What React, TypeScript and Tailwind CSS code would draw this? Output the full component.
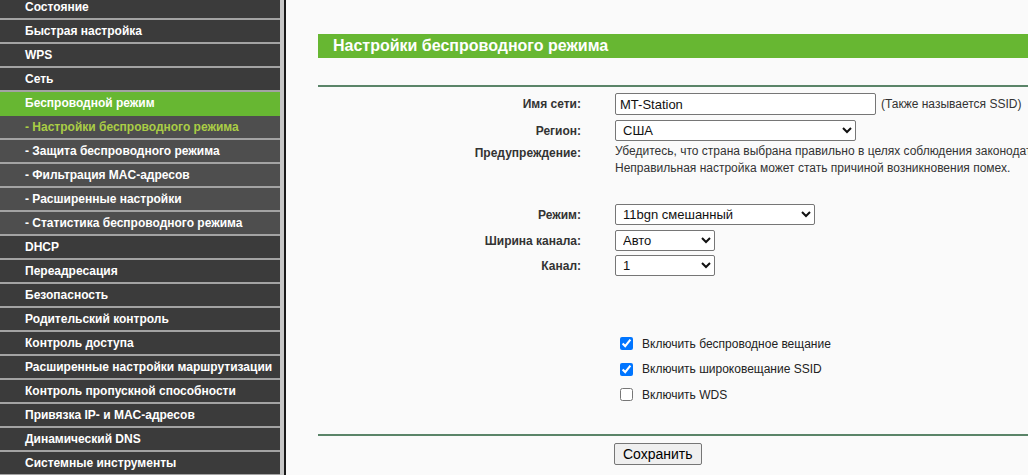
const menu: { label: string; sub?: boolean; active?: boolean; current?: boolean }[] = [
  { label: 'Состояние' },
  { label: 'Быстрая настройка' },
  { label: 'WPS' },
  { label: 'Сеть' },
  { label: 'Беспроводной режим', active: true },
  { label: '- Настройки беспроводного режима', sub: true, current: true },
  { label: '- Защита беспроводного режима', sub: true },
  { label: '- Фильтрация MAC-адресов', sub: true },
  { label: '- Расширенные настройки', sub: true },
  { label: '- Статистика беспроводного режима', sub: true },
  { label: 'DHCP' },
  { label: 'Переадресация' },
  { label: 'Безопасность' },
  { label: 'Родительский контроль' },
  { label: 'Контроль доступа' },
  { label: 'Расширенные настройки маршрутизации' },
  { label: 'Контроль пропускной способности' },
  { label: 'Привязка IP- и MAC-адресов' },
  { label: 'Динамический DNS' },
  { label: 'Системные инструменты' },
];

function Sidebar() {
  return (
    <div className="w-[286px] shrink-0 h-full bg-[#c6c6c6] border-r-2 border-[#1a1a1a] pr-[4px] overflow-hidden">
      <ul className="-mt-[4px]">
        {menu.map((m) => {
          let cls = 'bg-[#3b3b3b] border-[#a3a3a3] text-white';
          if (m.active) cls = 'bg-[#67b732] border-[#67b732] text-white';
          else if (m.sub) cls = 'bg-[#4e4e4e] border-[#a3a3a3] text-white';
          if (m.current) cls = 'bg-[#4e4e4e] border-[#a3a3a3] text-[#aacd45]';
          return (
            <li
              key={m.label}
              className={`h-[24px] border-b-2 pl-[25px] flex items-center text-[12px] font-bold whitespace-nowrap ${cls}`}
            >
              {m.label}
            </li>
          );
        })}
      </ul>
    </div>
  );
}

function Label({ children }: { children: React.ReactNode }) {
  return <div className="text-right text-[12px] font-bold text-[#333]">{children}</div>;
}

function Select({ value, width }: { value: string; width: string }) {
  return (
    <select
      defaultValue={value}
      className={`${width} h-[21px] border border-[#767676] rounded-[2px] bg-white text-[13px] text-[#111] pl-[3px]`}
    >
      <option>{value}</option>
    </select>
  );
}

function Check({ checked, label }: { checked: boolean; label: string }) {
  return (
    <label className="h-[25.5px] flex items-center gap-[9px] pl-[5px] text-[12px] text-[#222]">
      <input type="checkbox" defaultChecked={checked} className="w-[13px] h-[13px] accent-[#0075ff]" />
      {label}
    </label>
  );
}

export default function App() {
  return (
    <div className="w-[1028px] h-[475px] flex overflow-hidden bg-[#fafafa] font-['Liberation_Sans',Arial,sans-serif]">
      <Sidebar />
      <main className="flex-1 min-w-0 overflow-hidden pl-[32px] pt-[34px]">
        <div className="h-[24px] bg-[#67b732] pl-[15px] flex items-center text-white text-[16px] font-bold whitespace-nowrap">
          Настройки беспроводного режима
        </div>
        <div className="mt-[27px] border-t-2 border-[#5a8468]" />

        <div className="grid grid-cols-[263px_1fr] gap-x-[34px] items-center mt-[6px]">
          <Label>Имя сети:</Label>
          <div className="flex items-center gap-[5px] whitespace-nowrap">
            <input
              defaultValue="MT-Station"
              className="w-[261px] h-[22px] border border-[#767676] rounded-[2px] bg-white text-[13px] px-[4px] text-[#111]"
            />
            <span className="text-[12px] text-[#333]">(Также называется SSID)</span>
          </div>

          <div className="col-span-2 h-[5px]" />
          <Label>Регион:</Label>
          <Select value="США" width="w-[241px]" />

          <div className="col-span-2 h-[3px]" />
          <div className="self-start">
            <Label>Предупреждение:</Label>
          </div>
          <div className="text-[12px] leading-[17px] text-[#333] whitespace-nowrap -mt-[1px]">
            Убедитесь, что страна выбрана правильно в целях соблюдения законодательства.
            <br />
            Неправильная настройка может стать причиной возникновения помех.
          </div>

          <div className="col-span-2 h-[27px]" />
          <Label>Режим:</Label>
          <Select value="11bgn смешанный" width="w-[200px]" />

          <div className="col-span-2 h-[5px]" />
          <Label>Ширина канала:</Label>
          <Select value="Авто" width="w-[100px]" />

          <div className="col-span-2 h-[4px]" />
          <Label>Канал:</Label>
          <Select value="1" width="w-[100px]" />

          <div className="col-span-2 h-[55px]" />
          <div />
          <div className="flex flex-col">
            <Check checked label="Включить беспроводное вещание" />
            <Check checked label="Включить широковещание SSID" />
            <Check checked={false} label="Включить WDS" />
          </div>
        </div>

        <div className="mt-[26px] border-t-2 border-[#5a8468]" />
        <div className="grid grid-cols-[263px_1fr] gap-x-[34px] mt-[6px]">
          <div />
          <div>
            <button className="h-[22px] px-[8px] -ml-[1px] border border-[#767676] rounded-[2px] bg-[#efefef] text-[14px] text-black">
              Сохранить
            </button>
          </div>
        </div>
      </main>
    </div>
  );
}
